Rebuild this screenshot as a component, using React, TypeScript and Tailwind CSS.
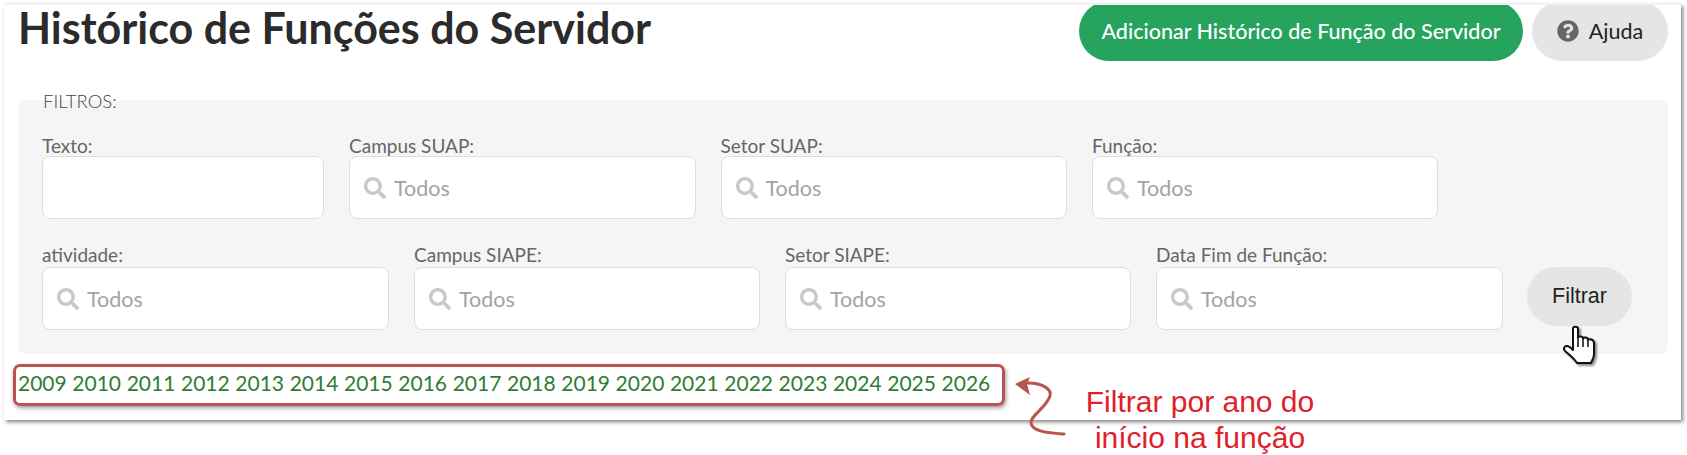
import React from 'react';
import { FaSearch, FaQuestionCircle } from 'react-icons/fa';

const years = Array.from({ length: 18 }, (_, i) => 2009 + i);

const Field: React.FC<{ label: string; width: string; search?: boolean; raised?: boolean }> = ({ label, width, search = true, raised = false }) => (
  <div className={`flex flex-col ${width}`}>
    <label className={`text-[19px] leading-[20px] text-[#666666] h-[20px] ${raised ? 'mb-[2px]' : ''}`}>{label}</label>
    <div className="h-[63px] bg-white border border-[#dedede] rounded-[8px] flex items-center pl-[14px] gap-[8px]">
      {search && (
        <>
          <FaSearch className="w-[22px] h-[22px] text-[#c9c9c9]" />
          <span className="text-[21.5px] text-[#a3a3a3] pt-[2px]">Todos</span>
        </>
      )}
    </div>
  </div>
);

const HandCursor = () => (
  <svg viewBox="0 0 34 40" className="absolute left-[1563px] top-[325px] w-[34px] h-[40px] drop-shadow-[2px_2px_1px_rgba(0,0,0,0.45)]">
    <path
      d="M10 3.5C10 1 15 1 15 3.5V12.5C15 11 20 11 20 13.5C21 12 25 12 25 15C26 13.5 31 14 31 18V29C31 33 29 35 28 38H14C12 35 7 30 2 26C0 24 1 21 4 21C6 21 8 23 10 25Z"
      fill="#fff"
      stroke="#111"
      strokeWidth="2"
      strokeLinejoin="round"
    />
    <path d="M15 12V22M20 13V22M25 15V22" stroke="#111" strokeWidth="1.5" fill="none" />
  </svg>
);

const Arrow = () => (
  <svg viewBox="0 0 60 60" className="absolute left-[1012px] top-[376px] w-[60px] h-[60px] overflow-visible">
    <path d="M13 7C31 6 40 14 38 20C34 32 18 40 19 47C20 56 38 57 52 58" fill="none" stroke="#b85450" strokeWidth="3" strokeLinecap="round" />
    <path d="M3 8L18 1L15 8L18 19Z" fill="#b85450" />
  </svg>
);

export default function App() {
  return (
    <div className="relative w-[1687px] h-[455px] bg-white overflow-hidden font-['Lato',sans-serif]">
      <div className="ml-[4px] mt-[4px] w-[1677px] h-[416px] bg-white shadow-[2px_2px_4px_rgba(0,0,0,0.5)] border-t border-[#f3f3f3]">
        {/* Cabeçalho */}
        <div className="flex items-start pl-[14px] pr-[13px] h-[95px]">
          <h1 className="flex-1 text-[43px] leading-[46px] font-bold text-[#2b2b2b]">Histórico de Funções do Servidor</h1>
          {/* os botões aparecem cortados no topo */}
          <div className="flex gap-[9px] h-[56px] overflow-hidden">
            <button className="w-[444px] h-[60px] -mt-[4px] rounded-[32px] bg-[#26a35c] text-white text-[21.5px] font-medium">
              Adicionar Histórico de Função do Servidor
            </button>
            <button className="w-[136px] h-[60px] -mt-[4px] rounded-[32px] bg-[#e5e5e5] text-[#222] text-[21.5px] flex items-center justify-center gap-[10px]">
              <FaQuestionCircle className="w-[22px] h-[22px] text-[#666]" />
              Ajuda
            </button>
          </div>
        </div>

        {/* Filtros */}
        <div className="relative ml-[14px] w-[1650px] h-[254px] bg-[#f5f5f5] rounded-[8px] pl-[24px] pt-[36px]">
          <span className="absolute left-[25px] -top-[9px] text-[18.5px] leading-[20px] font-light text-[#444]">FILTROS:</span>
          <div className="flex gap-[25px]">
            <Field label="Texto:" width="w-[282px]" search={false} />
            <Field label="Campus SUAP:" width="w-[346.5px]" />
            <Field label="Setor SUAP:" width="w-[346.5px]" />
            <Field label="Função:" width="w-[346px]" />
          </div>
          <div className="flex gap-[25px] mt-[26px] items-start">
            <Field label="atividade:" width="w-[347px]" raised />
            <Field label="Campus SIAPE:" width="w-[346px]" raised />
            <Field label="Setor SIAPE:" width="w-[346px]" raised />
            <Field label="Data Fim de Função:" width="w-[347px]" raised />
            <button className="mt-[22px] -ml-[1px] w-[105px] h-[59px] rounded-[30px] bg-[#e5e5e5] text-[#222] text-[21.5px] font-['Liberation_Sans',sans-serif]">
              Filtrar
            </button>
          </div>
        </div>

        {/* Anos */}
        <div className="ml-[9px] mt-[10px] w-[992px] h-[42px] border-[3px] border-[#b85450] rounded-[7px] shadow-[1px_2px_4px_rgba(0,0,0,0.4)] flex items-center gap-[5.6px] pl-[2px] pb-[4px] text-[21px] text-[#2e7d32]">
          {years.map((y) => (
            <a key={y}>{y}</a>
          ))}
        </div>
      </div>

      <Arrow />
      <HandCursor />
      <p className="absolute left-[1080px] top-[384px] w-[240px] text-center text-[30px] leading-[36px] text-[#e0202a] font-['Liberation_Sans',sans-serif]">
        Filtrar por ano do início na função
      </p>
    </div>
  );
}
